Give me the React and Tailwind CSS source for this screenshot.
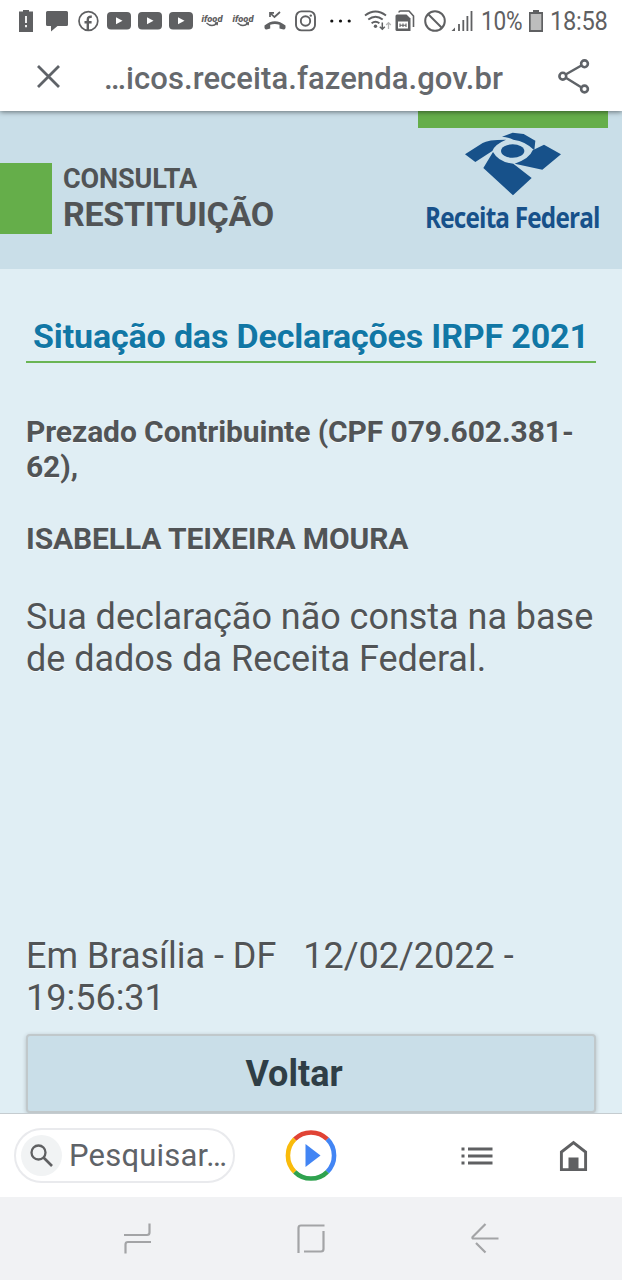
import React from "react";

const GREY = "#5f6062";

function YoutubeIcon({ className }) {
  return (
    <svg className={className} width="24" height="18" viewBox="0 0 24 18">
      <rect width="24" height="17.5" rx="4" fill={GREY} />
      <path d="M9 5.3 L15.5 8.8 L9 12.3 Z" fill="#fff" />
    </svg>
  );
}

function IfoodIcon({ className }) {
  return (
    <svg className={className} width="23" height="18" viewBox="0 0 23 18">
      <text x="0.5" y="9.5" fontSize="9.5" fontStyle="italic" fontWeight="900" textLength="21" lengthAdjust="spacingAndGlyphs" fill={GREY} fontFamily="Roboto, sans-serif">ifood</text>
      <path d="M5.5 11 Q11 16 16 11.2 M13.8 11 L16.4 10.8 L16.2 13.2" fill="none" stroke={GREY} strokeWidth="1.3" />
    </svg>
  );
}

function StatusBar() {
  return (
    <div className="relative z-20 flex h-[42px] items-center bg-white pl-[19px] text-[#5f6062]">
      <svg width="14" height="22" viewBox="0 0 14 22">
        <path d="M4 0 H10 V1.5 H14 V22 H0 V1.5 H4 Z" fill={GREY} />
        <path d="M7 6 V13 M7 15 V17.3" stroke="#fff" strokeWidth="1.8" />
      </svg>
      <svg className="ml-[13px]" width="22" height="22" viewBox="0 0 22 22">
        <path d="M1.5 1 H20.5 Q22 1 22 2.5 V14.5 Q22 16 20.5 16 H11.5 L5 21.5 V16 H1.5 Q0 16 0 14.5 V2.5 Q0 1 1.5 1 Z" fill={GREY} />
      </svg>
      <svg className="ml-[10px]" width="21" height="22" viewBox="0 0 21 22">
        <circle cx="10.4" cy="11" r="9.4" fill="none" stroke={GREY} strokeWidth="1.7" />
        <path d="M9.8 20 V9.5 Q9.8 6.3 13.8 6.8 M6.5 12.2 H13.6" fill="none" stroke={GREY} strokeWidth="2.4" />
      </svg>
      <YoutubeIcon className="ml-[8px]" />
      <YoutubeIcon className="ml-[7px]" />
      <YoutubeIcon className="ml-[7px]" />
      <IfoodIcon className="ml-[8px]" />
      <IfoodIcon className="ml-[8px]" />
      <svg className="ml-[9px]" width="22" height="20" viewBox="0 0 22 20">
        <path d="M6 6 V1.8 H10 M6 1.8 L10.5 6 L16 1" fill="none" stroke={GREY} strokeWidth="1.7" />
        <path d="M0.5 14.5 Q10.8 6 21.5 14.5 V17 Q21 18.5 19.5 18.5 L15.5 17.5 V13.8 Q10.8 12 6.2 13.8 V17.5 L2.5 18.5 Q1 18.5 0.5 17 Z" fill={GREY} />
      </svg>
      <svg className="ml-[9px]" width="21" height="22" viewBox="0 0 21 22">
        <rect x="1" y="1.4" width="19" height="19" rx="5.5" fill="none" stroke={GREY} strokeWidth="1.9" />
        <circle cx="10.5" cy="11" r="4.7" fill="none" stroke={GREY} strokeWidth="1.9" />
        <circle cx="15.8" cy="5.6" r="1.2" fill={GREY} />
      </svg>
      <svg className="ml-[14px]" width="21" height="4" viewBox="0 0 21 4">
        <circle cx="1.8" cy="2" r="1.6" fill="#111" />
        <circle cx="10.5" cy="2" r="1.6" fill="#111" />
        <circle cx="19.2" cy="2" r="1.6" fill="#111" />
      </svg>
      <svg className="ml-[13px]" width="28" height="22" viewBox="0 0 28 22">
        <path d="M1 5.5 Q11.5 -2.5 22 5.5 M4.3 9.5 Q11.5 3.8 18.7 9.5 M7.6 13.2 Q11.5 10.2 15.4 13.2" fill="none" stroke={GREY} strokeWidth="1.9" />
        <circle cx="11.5" cy="16.3" r="1.7" fill={GREY} />
        <path d="M18.3 12.5 V19 M15.8 16.8 L18.3 19.3 L20.8 16.8" fill="none" stroke={GREY} strokeWidth="1.5" />
        <path d="M24.5 19 V12.8 M22.2 15 L24.5 12.6 L26.8 15" fill="none" stroke="#b5b5b5" strokeWidth="1.3" />
      </svg>
      <svg className="ml-[3px]" width="20" height="22" viewBox="0 0 20 22">
        <path d="M4 2.4 Q4 1 5.5 1 H14 L18.5 6 V17" fill="none" stroke={GREY} strokeWidth="1.6" />
        <path d="M2 4.5 H11.5 L15.5 8.5 V21 H2 Q0.5 21 0.5 19.5 V6 Q0.5 4.5 2 4.5 Z" fill={GREY} />
        <rect x="3" y="11.5" width="10" height="7" fill="#fff" />
        <path d="M5 13.5 V17 M11 13.5 V17 M5 15.2 H11 M8 13.5 V17" stroke={GREY} strokeWidth="1.1" />
      </svg>
      <svg className="ml-[9px]" width="22" height="22" viewBox="0 0 22 22">
        <circle cx="11" cy="11" r="9.8" fill="none" stroke={GREY} strokeWidth="2" />
        <path d="M4 4 L18 18" stroke={GREY} strokeWidth="2" />
      </svg>
      <svg className="ml-[5px]" width="22" height="22" viewBox="0 0 22 22">
        <path d="M0.5 21 L4 17.5 V21 Z" fill={GREY} />
        <path d="M8 21 V14 M12.3 21 V10 M16.4 21 V6 M20.5 21 V1" stroke={GREY} strokeWidth="1.8" />
      </svg>
      <span className="ml-[8px] inline-block w-[48px] origin-left scale-x-[0.87] whitespace-nowrap text-[26px] leading-[44px] tracking-[-0.3px]">10%</span>
      <svg width="14" height="22" viewBox="0 0 14 22">
        <path d="M4 0 H10 V2 H14 V22 H0 V2 H4 Z" fill={GREY} />
        <rect x="1.7" y="4" width="10.6" height="16" fill="#bdbdbd" />
      </svg>
      <span className="ml-[7px] inline-block origin-left scale-x-[0.91] whitespace-nowrap text-[26px] leading-[44px] tracking-[-0.3px]">18:58</span>
    </div>
  );
}

function AddressBar() {
  return (
    <div className="relative z-10 flex h-[69px] items-center bg-white pl-[36px] shadow-[0_1px_5px_rgba(0,0,0,0.5)]">
      <svg width="25" height="25" viewBox="0 0 25 25">
        <path d="M2 2 L23 23 M23 2 L2 23" stroke="#5f6368" strokeWidth="2.8" />
      </svg>
      <span className="ml-[43px] w-[401px] whitespace-nowrap pt-[6px] text-[31px] font-medium tracking-[0.08px] text-[#66696d]">…icos.receita.fazenda.gov.br</span>
      <svg className="ml-[53px]" width="33" height="36" viewBox="0 0 33 36">
        <path d="M5 17 L26 5 M5 17 L26 30" stroke="#5f6368" strokeWidth="2.5" />
        <circle cx="4.8" cy="17.2" r="3.4" fill="#fff" stroke="#5f6368" strokeWidth="2.6" />
        <circle cx="26.5" cy="4.8" r="3.4" fill="#fff" stroke="#5f6368" strokeWidth="2.6" />
        <circle cx="26.5" cy="30" r="3.4" fill="#fff" stroke="#5f6368" strokeWidth="2.6" />
      </svg>
    </div>
  );
}

function ReceitaLogo() {
  return (
    <div className="text-[#17518a]">
      <svg className="ml-[46px] mt-[3px]" width="98" height="66" viewBox="192 78 294 198" fill="currentColor">
        <path d="M195 148 L248 114 Q262 104 318 104 Q284 118 277 138 L226 171 Z" />
        <path d="M306 95 L338 83 L371 87 L406 107 L403 136 Q378 109 340 104 Q322 96 306 95 Z" />
        <ellipse cx="338" cy="138" rx="35" ry="20" />
        <path d="M344 176 Q388 162 398 136 L432 119 L483 148 L427 194 Z" />
        <path d="M279 141 Q296 172 340 176 L395 219 L339 271 L250 189 Z" />
      </svg>
      <div className="ml-[7px] h-[40px] w-[210px] origin-left scale-x-[0.84] whitespace-nowrap font-['Open_Sans',sans-serif] text-[29px] font-bold leading-[40px] tracking-[-1px]">Receita Federal</div>
    </div>
  );
}

function SiteHeader() {
  return (
    <header className="flex h-[158px] bg-[#c9dee8]">
      <div className="mt-[52px] h-[71px] w-[52px] bg-[#65ae4a]" />
      <div className="ml-[11px] mt-[53px] w-[355px] font-bold text-[#515456]">
        <div className="whitespace-nowrap text-[27px] leading-[30px] tracking-[-0.1px]">CONSULTA</div>
        <div className="whitespace-nowrap text-[34px] leading-[40px] tracking-[-0.28px]">RESTITUIÇÃO</div>
      </div>
      <div className="w-[190px]">
        <div className="h-[17px] bg-[#65ae4a]" />
        <ReceitaLogo />
      </div>
    </header>
  );
}

function Content() {
  return (
    <main className="flex h-[844px] flex-col overflow-hidden bg-[#e0eef4] px-[26px] text-[#515456] [text-shadow:0_1px_0_#f4f9fb]">
      <h1 className="mt-[47px] h-[47px] whitespace-nowrap border-b-2 border-[#6ab554] pl-[7px] text-[34px] font-bold leading-[40px] tracking-[-0.15px] text-[#1177a5]">Situação das Declarações IRPF 2021</h1>
      <p className="mt-[51px] whitespace-nowrap text-[30px] font-bold leading-[35px] tracking-[-0.09px]">
        Prezado Contribuinte (CPF 079.602.381-<br />62),
      </p>
      <p className="mt-[37px] whitespace-nowrap text-[30px] font-bold leading-[35px] tracking-[-0.12px]">ISABELLA TEIXEIRA MOURA</p>
      <p className="mt-[40px] whitespace-nowrap text-[36px] leading-[42px] tracking-[-0.03px]">
        Sua declaração não consta na base<br />de dados da Receita Federal.
      </p>
      <p className="mt-[255px] whitespace-pre text-[36px] leading-[42px]">
        {"Em Brasília - DF   12/02/2022 -"}<br />19:56:31
      </p>
      <button className="mt-[15px] h-[79px] w-[570px] shrink-0 rounded-[4px] border-2 border-[#c0c8cb] bg-[#c9dee8] pr-[34px] text-[36px] font-bold text-[#2f3e46] shadow-[0_1px_4px_rgba(0,0,0,0.2)]">Voltar</button>
    </main>
  );
}

function BottomToolbar() {
  return (
    <div className="flex h-[84px] items-center border-t border-[#c5ccd0] bg-white pl-[14px]">
      <div className="flex h-[55px] w-[221px] items-center rounded-full border-2 border-[#e9eaed] pl-[5px]">
        <div className="flex h-[41px] w-[41px] shrink-0 items-center justify-center rounded-full bg-[#f1f3f4]">
          <svg width="25" height="25" viewBox="0 0 25 25">
            <circle cx="9.5" cy="9.5" r="7" fill="none" stroke="#5f6062" strokeWidth="2.3" />
            <path d="M14.5 14.5 L23 23" stroke="#5f6062" strokeWidth="2.6" />
          </svg>
        </div>
        <span className="ml-[7px] whitespace-nowrap pt-[2px] text-[31px] tracking-[0.2px] text-[#5f6368]">Pesquisar…</span>
      </div>
      <svg className="ml-[50px]" width="52" height="52" viewBox="0 0 52 52">
        <g fill="none" strokeWidth="4.6">
          <path d="M9.7 9.2 A23 23 0 0 1 42.3 9.2" stroke="#e04335" />
          <path d="M42.3 9.2 A23 23 0 0 1 42.3 41.8" stroke="#4285f4" />
          <path d="M42.3 41.8 A23 23 0 0 1 9.7 41.8" stroke="#2fa24f" />
          <path d="M9.7 41.8 A23 23 0 0 1 9.7 9.2" stroke="#f9bb0b" />
        </g>
        <path d="M20.5 14 L35.5 25.5 L20.5 37 Z" fill="#4285f4" />
      </svg>
      <svg className="ml-[124px]" width="32" height="20" viewBox="0 0 32 20">
        <path d="M0.5 3 H3.5 M0.5 10 H3.5 M0.5 17 H3.5 M7 3 H31.5 M7 10 H31.5 M7 17 H31.5" stroke="#5f6062" strokeWidth="3" />
      </svg>
      <svg className="ml-[66px]" width="29" height="32" viewBox="0 0 29 32">
        <path d="M2.4 29.6 V12 L14.5 2.5 L26.6 12 V29.6 Z" fill="none" stroke="#5f6062" strokeWidth="2.9" />
        <rect x="9.5" y="17.5" width="10" height="13" fill="#5f6062" />
      </svg>
    </div>
  );
}

function NavigationBar() {
  return (
    <div className="flex h-[83px] items-center bg-[#f1f2f4] pb-[2px] pl-[123px]">
      <svg width="29" height="32" viewBox="0 0 29 32" fill="none" stroke="#a3a4a6" strokeWidth="2.2">
        <path d="M1 13 H24 Q26.5 13 26.5 10.5 V1.5 M28 20 H5 Q2.5 20 2.5 22.5 V31.5" />
      </svg>
      <svg className="ml-[144px]" width="29" height="32" viewBox="0 0 29 32" fill="none" stroke="#a3a4a6" strokeWidth="2.2">
        <path d="M2.5 31 V6 Q2.5 3.5 5 3.5 H28.5 M8 29.5 H25 Q27.5 29.5 27.5 27 V9" />
      </svg>
      <svg className="ml-[145px]" width="30" height="32" viewBox="0 0 30 32" fill="none" stroke="#a3a4a6" strokeWidth="2.2">
        <path d="M15.5 2 L2.5 15 Q2 16.5 3.5 16.5 H28.5 M6 21 L15.5 30.5" />
      </svg>
    </div>
  );
}

export default function App() {
  return (
    <div className="h-[1280px] w-[622px] overflow-hidden bg-white font-['Roboto',sans-serif]">
      <StatusBar />
      <AddressBar />
      <SiteHeader />
      <Content />
      <BottomToolbar />
      <NavigationBar />
    </div>
  );
}
